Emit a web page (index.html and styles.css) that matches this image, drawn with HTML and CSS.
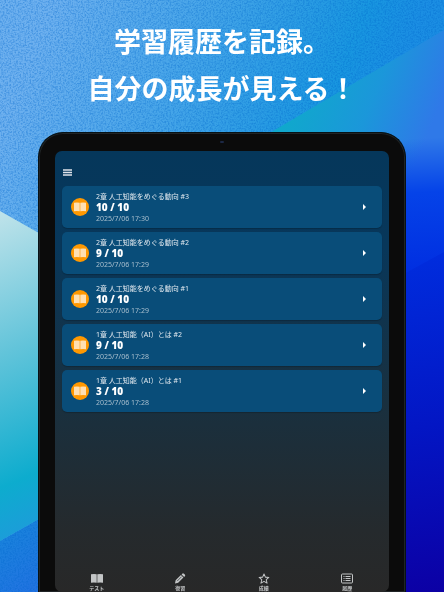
FILE: index.html
```html
<!DOCTYPE html>
<html lang="ja">
<head>
<meta charset="utf-8">
<meta name="viewport" content="width=device-width, initial-scale=1">
<title>学習履歴</title>
<link rel="stylesheet" href="styles.css">
</head>
<body>
<svg class="backdrop" viewBox="0 0 444 592" preserveAspectRatio="none" aria-hidden="true">
  <defs>
    <linearGradient id="sky" gradientUnits="userSpaceOnUse" x1="30" y1="60" x2="350" y2="190">
      <stop offset="0" stop-color="#6db0ef"/><stop offset=".45" stop-color="#43a4e8"/><stop offset=".85" stop-color="#1896e0"/><stop offset="1" stop-color="#1b8ee3"/>
    </linearGradient>
    <linearGradient id="ice" gradientUnits="userSpaceOnUse" x1="-10" y1="215" x2="120" y2="520">
      <stop offset="0" stop-color="#c0e3ea"/><stop offset=".4" stop-color="#62c4da"/><stop offset=".77" stop-color="#0dacce"/><stop offset="1" stop-color="#2495df"/>
    </linearGradient>
    <linearGradient id="beam" gradientUnits="userSpaceOnUse" x1="290" y1="110" x2="440" y2="170">
      <stop offset="0" stop-color="#10a8cc"/><stop offset=".45" stop-color="#1b97da"/><stop offset=".85" stop-color="#2f79e8"/><stop offset="1" stop-color="#2f79e8"/>
    </linearGradient>
    <linearGradient id="deep" gradientUnits="userSpaceOnUse" x1="425" y1="138" x2="432" y2="280">
      <stop offset="0" stop-color="#0543e8" stop-opacity="0"/><stop offset=".38" stop-color="#0543e8"/><stop offset="1" stop-color="#002ce0"/>
    </linearGradient>
    <linearGradient id="night" gradientUnits="userSpaceOnUse" x1="406" y1="260" x2="450" y2="592">
      <stop offset="0" stop-color="#002cdd"/><stop offset=".5" stop-color="#0316c4"/><stop offset="1" stop-color="#0c00a4"/>
    </linearGradient>
    <linearGradient id="floor" gradientUnits="userSpaceOnUse" x1="0" y1="530" x2="40" y2="592">
      <stop offset="0" stop-color="#1984dc"/><stop offset="1" stop-color="#2372e2"/>
    </linearGradient>
    <filter id="grain" x="0" y="0" width="100%" height="100%" color-interpolation-filters="sRGB">
      <feTurbulence type="fractalNoise" baseFrequency=".6" numOctaves="2" seed="4"/>
      <feColorMatrix values="0 0 0 0 0  0 0 0 0 .4  0 0 0 0 .8  3 0 0 0 -1.2"/>
    </filter>
  </defs>
  <rect width="444" height="592" fill="url(#sky)"/>
  <path d="M0 541L60 507V592H0z" fill="url(#floor)"/>
  <rect width="444" height="592" filter="url(#grain)" opacity=".35"/>
  <path d="M0 211L60 245V507L0 541z" fill="url(#ice)"/>
  <path d="M251 144L444 30V592H251z" fill="url(#beam)"/>
  <path d="M380 130H444V592H380z" fill="url(#deep)"/>
  <path d="M380 287L444 252V592H380z" fill="url(#night)"/>
</svg>

<main class="poster">
  <h1 class="headline">学習履歴を記録。<br>自分の成長が見える！</h1>

  <section class="tablet">
    <span class="camera"></span>
    <div class="screen">
      <header class="topbar">
        <button class="menu" type="button" aria-label="メニュー">
          <svg viewBox="0 0 9 7"><path d="M0 1h9M0 3.5h9M0 6h9" stroke="#dfe3ea" stroke-width="1.4"/></svg>
        </button>
      </header>

      <ul class="history">
        <li><a class="card" href="#">
          <span class="badge"><svg viewBox="0 0 24 20"><use href="#book"/></svg></span>
          <span class="info"><span class="name">2章 人工知能をめぐる動向 #3</span><strong class="score">10 / 10</strong><time class="date">2025/7/06 17:30</time></span>
          <svg class="arrow" viewBox="0 0 3 6"><path d="M0 0L3 3L0 6z"/></svg>
        </a></li>
        <li><a class="card" href="#">
          <span class="badge"><svg viewBox="0 0 24 20"><use href="#book"/></svg></span>
          <span class="info"><span class="name">2章 人工知能をめぐる動向 #2</span><strong class="score">9 / 10</strong><time class="date">2025/7/06 17:29</time></span>
          <svg class="arrow" viewBox="0 0 3 6"><path d="M0 0L3 3L0 6z"/></svg>
        </a></li>
        <li><a class="card" href="#">
          <span class="badge"><svg viewBox="0 0 24 20"><use href="#book"/></svg></span>
          <span class="info"><span class="name">2章 人工知能をめぐる動向 #1</span><strong class="score">10 / 10</strong><time class="date">2025/7/06 17:29</time></span>
          <svg class="arrow" viewBox="0 0 3 6"><path d="M0 0L3 3L0 6z"/></svg>
        </a></li>
        <li><a class="card" href="#">
          <span class="badge"><svg viewBox="0 0 24 20"><use href="#book"/></svg></span>
          <span class="info"><span class="name">1章 人工知能（AI）とは #2</span><strong class="score">9 / 10</strong><time class="date">2025/7/06 17:28</time></span>
          <svg class="arrow" viewBox="0 0 3 6"><path d="M0 0L3 3L0 6z"/></svg>
        </a></li>
        <li><a class="card" href="#">
          <span class="badge"><svg viewBox="0 0 24 20"><use href="#book"/></svg></span>
          <span class="info"><span class="name">1章 人工知能（AI）とは #1</span><strong class="score">3 / 10</strong><time class="date">2025/7/06 17:28</time></span>
          <svg class="arrow" viewBox="0 0 3 6"><path d="M0 0L3 3L0 6z"/></svg>
        </a></li>
      </ul>

      <nav class="tabs">
        <a class="tab" href="#"><svg viewBox="0 0 24 20"><path id="book" d="M0 1.500Q6 .5 11.400 1.500V18.500Q6 17.500 0 18.500zM12.600 1.500Q18 .5 24 1.500V18.500Q18 17.500 12.600 18.500z"/></svg>テスト</a>
        <a class="tab" href="#"><svg viewBox="0 0 24 24"><path d="M1 23l1.500-7L14 4.500l5.500 5.500L8 21.500zM15.500 3l2-2q1.500-1 3 .5l2 2q1.500 1.500.5 3l-2 2z"/><path d="M6 17.500L15.500 8" stroke="#25292b" stroke-width="1.500"/></svg>復習</a>
        <a class="tab" href="#"><svg viewBox="0 0 24 24"><path d="M12 2l3 7 7.600.7-5.700 5 1.700 7.500L12 18.200l-6.600 4 1.700-7.500-5.700-5L9 9z" fill="none" stroke="#c3c5c6" stroke-width="2.200" stroke-linejoin="round"/></svg>成績</a>
        <a class="tab" href="#" aria-current="page"><svg viewBox="0 0 24 20"><g fill="none" stroke="#c3c5c6" stroke-width="2"><rect x="1" y="1" width="22" height="18" rx="2"/><path d="M5 6h2M9 6h10M5 10h2M9 10h10M5 14h2M9 14h10"/></g></svg>履歴</a>
      </nav>
    </div>
  </section>
</main>
</body>
</html>
```
FILE: styles.css
```css
* {
  box-sizing: border-box;
}

body {
  margin: 0;
  background: #1691da;
  color: #fff;
  font-family: "Noto Sans", "Noto Sans CJK JP", sans-serif;
}

.backdrop {
  position: fixed;
  inset: 0;
  z-index: -1;
  width: 100%;
  height: 100%;
}

.poster {
  display: flex;
  flex-direction: column;
  min-height: 100vh;
  padding: 17px 38px 0;
}

.headline {
  margin: 0 0 21px;
  font: 700 27px/47px "Noto Sans CJK JP", sans-serif;
  text-align: center;
  white-space: nowrap;
}

.tablet {
  position: relative;
  display: flex;
  flex: 1;
  padding: 18px 16px 0;
  border: 1px solid #071216;
  border-bottom: 0;
  border-radius: 25px 25px 0 0;
  background: #0b0b0b;
  box-shadow: inset 0 0 0 1px #202426;
}

.camera {
  position: absolute;
  top: 8px;
  left: 50%;
  width: 4px;
  height: 2px;
  margin-left: -2px;
  border-radius: 2px;
  background: #1c2845;
}

.screen {
  display: flex;
  flex: 1;
  flex-direction: column;
  min-width: 0;
  border-radius: 7px;
  background: linear-gradient(#05375b, #08375a 22%, #19303f 57%, #252a2d 86%, #282828);
}

.topbar {
  display: flex;
  align-items: flex-end;
  height: 35px;
  padding: 0 8px 10px;
}

.menu {
  display: flex;
  padding: 0;
  border: 0;
  background: none;
}

.menu svg {
  width: 9px;
  height: 7px;
}

.history {
  display: grid;
  gap: 4px;
  margin: 0;
  padding: 0 7px;
  list-style: none;
}

.card {
  display: flex;
  align-items: center;
  gap: 7px;
  height: 42px;
  padding: 0 16px 0 9px;
  border-radius: 5px;
  background: #094d79;
  box-shadow: 0 1px 1px #0003;
  color: #fff;
  text-decoration: none;
}

.badge {
  display: flex;
  align-items: center;
  justify-content: center;
  width: 18px;
  height: 18px;
  border-radius: 50%;
  background: #ff9800;
}

.badge svg {
  width: 12px;
  height: 10px;
  fill: #ffe0b2;
}

.info {
  display: flex;
  flex: 1;
  flex-direction: column;
  font-size: 7px;
  line-height: 11px;
}

.name {
  color: #e2e9ef;
}

.score {
  font-size: 10px;
  font-weight: 900;
}

.date {
  color: #a9bfce;
}

.arrow {
  width: 3px;
  height: 6px;
  fill: #fff;
}

.tabs {
  display: grid;
  grid-template-columns: repeat(4, 1fr);
  margin-top: auto;
}

.tab {
  display: flex;
  flex-direction: column;
  align-items: center;
  color: #c3c5c6;
  font-size: 5px;
  font-weight: 700;
  line-height: 8px;
  text-decoration: none;
}

.tab svg {
  width: 12px;
  height: 11px;
  fill: #c3c5c6;
}
```
